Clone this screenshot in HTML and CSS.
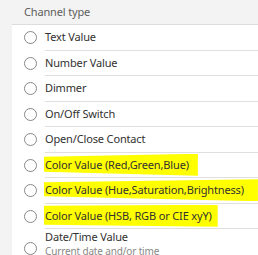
FILE: index.html
```html
<!DOCTYPE html>
<html lang="en">
<head>
    <meta charset="UTF-8">
    <title>Channel type</title>
    <link rel="stylesheet" href="styles.css">
</head>
<body>
    <div class="header">Channel type</div>
    <div class="panel">
        <div class="option">
            <span class="radio"></span>
            <div class="label"><div class="title">Text Value</div></div>
        </div>
        <div class="option">
            <span class="radio"></span>
            <div class="label"><div class="title">Number Value</div></div>
        </div>
        <div class="option">
            <span class="radio"></span>
            <div class="label"><div class="title">Dimmer</div></div>
        </div>
        <div class="option">
            <span class="radio"></span>
            <div class="label"><div class="title">On/Off Switch</div></div>
        </div>
        <div class="option">
            <span class="radio"></span>
            <div class="label"><div class="title">Open/Close Contact</div></div>
        </div>
        <div class="option">
            <span class="radio"></span>
            <div class="label"><div class="title"><span class="mark mark-rgb">Color Value (Red,Green,Blue)</span></div></div>
        </div>
        <div class="option">
            <span class="radio"></span>
            <div class="label"><div class="title"><span class="mark mark-hsb">Color Value (Hue,Saturation,Brightness)</span></div></div>
        </div>
        <div class="option">
            <span class="radio"></span>
            <div class="label"><div class="title"><span class="mark mark-any">Color Value (HSB, RGB or CIE xyY)</span></div></div>
        </div>
        <div class="option">
            <span class="radio"></span>
            <div class="label">
                <div class="title">Date/Time Value</div>
                <div class="subtitle">Current date and/or time</div>
            </div>
        </div>
    </div>
</body>
</html>
```

FILE: styles.css
```css
body {
    margin: 0;
    background-color: #f3f3f3;
    font-family: "Noto Sans", "Open Sans", sans-serif;
    font-size: 11px;
    letter-spacing: -0.15px;
    color: #323130;
}
.header {
    height: 24px;
    line-height: 24px;
    padding-left: 24px;
    color: #605e5c;
}
.panel {
    margin-left: 12px;
    background-color: #fff;
    border-top: 1px solid #dcdcdc;
    min-height: 240px;
}
.option {
    display: flex;
    align-items: center;
}
.radio {
    flex: none;
    width: 11px;
    height: 11px;
    margin: 0 8px 0 12px;
    border: 1px solid #8a8886;
    border-radius: 50%;
}
.label {
    flex: 1;
    min-height: 24.5px;
    display: flex;
    flex-direction: column;
    justify-content: center;
    border-bottom: 1px solid #e1dfdd;
}
.title {
    line-height: 16px;
    white-space: nowrap;
}
.subtitle {
    font-size: 10px;
    line-height: 13px;
    color: #8a8886;
    padding-bottom: 8px;
}
/* marker strokes drawn over the screenshot */
.mark {
    display: inline-block;
    background-color: #ffff00;
    padding: 3px 9px 3px 1px;
    margin: -3px 0 -3px -1px;
    clip-path: polygon(0 3px, 100% 0, 100% 100%, 0 calc(100% - 4px));
}
.mark-hsb {
    padding-right: 14px;
    clip-path: polygon(0 3px, 100% 0, 100% 100%, 0 calc(100% - 5px));
}
.mark-any {
    padding-right: 6px;
    clip-path: polygon(0 1px, 100% 0, 100% 100%, 0 calc(100% - 2px));
}
```
